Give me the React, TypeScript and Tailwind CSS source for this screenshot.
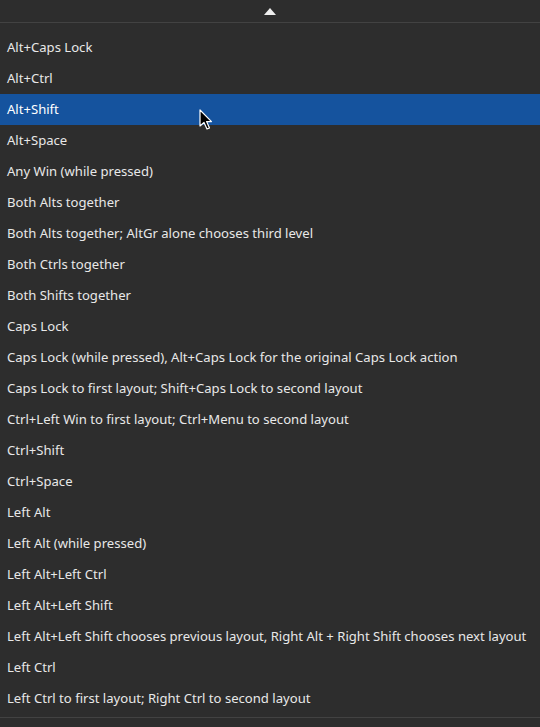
const items = [
  "Alt+Caps Lock",
  "Alt+Ctrl",
  "Alt+Shift",
  "Alt+Space",
  "Any Win (while pressed)",
  "Both Alts together",
  "Both Alts together; AltGr alone chooses third level",
  "Both Ctrls together",
  "Both Shifts together",
  "Caps Lock",
  "Caps Lock (while pressed), Alt+Caps Lock for the original Caps Lock action",
  "Caps Lock to first layout; Shift+Caps Lock to second layout",
  "Ctrl+Left Win to first layout; Ctrl+Menu to second layout",
  "Ctrl+Shift",
  "Ctrl+Space",
  "Left Alt",
  "Left Alt (while pressed)",
  "Left Alt+Left Ctrl",
  "Left Alt+Left Shift",
  "Left Alt+Left Shift chooses previous layout, Right Alt + Right Shift chooses next layout",
  "Left Ctrl",
  "Left Ctrl to first layout; Right Ctrl to second layout",
];

const selected = 2;

function Cursor() {
  return (
    <svg
      width="14"
      height="22"
      viewBox="0 0 14 22"
      className="absolute left-[199px] top-[15px] z-10"
    >
      <path
        d="M1 1 L1 17 L5 13.5 L8 20 L10.5 19 L7.6 12.6 L12.5 12.6 Z"
        fill="#000"
        stroke="#fff"
        strokeWidth="1.2"
        strokeLinejoin="round"
      />
    </svg>
  );
}

export default function App() {
  return (
    <div className="w-[540px] h-[727px] bg-[#2d2d2d] text-[#e8e8e8] font-['Noto_Sans',sans-serif] text-[13.1px] flex flex-col overflow-hidden select-none">
      <div className="h-[23px] flex items-center justify-center border-b border-[#424242] shrink-0">
        <svg width="12" height="7" viewBox="0 0 12 7" className="mt-[1px]">
          <path d="M6 0 L12 7 L0 7 Z" fill="#eeeeee" />
        </svg>
      </div>
      <div className="flex flex-col pt-[9px]">
        {items.map((label, i) => (
          <div
            key={label}
            className={
              "relative h-[31px] flex items-center px-[7px] whitespace-nowrap " +
              (i === selected ? "bg-[#15539e] text-white" : "")
            }
          >
            {label}
            {i === selected && <Cursor />}
          </div>
        ))}
      </div>
      <div className="mt-[3px] border-t border-[#424242]" />
    </div>
  );
}
